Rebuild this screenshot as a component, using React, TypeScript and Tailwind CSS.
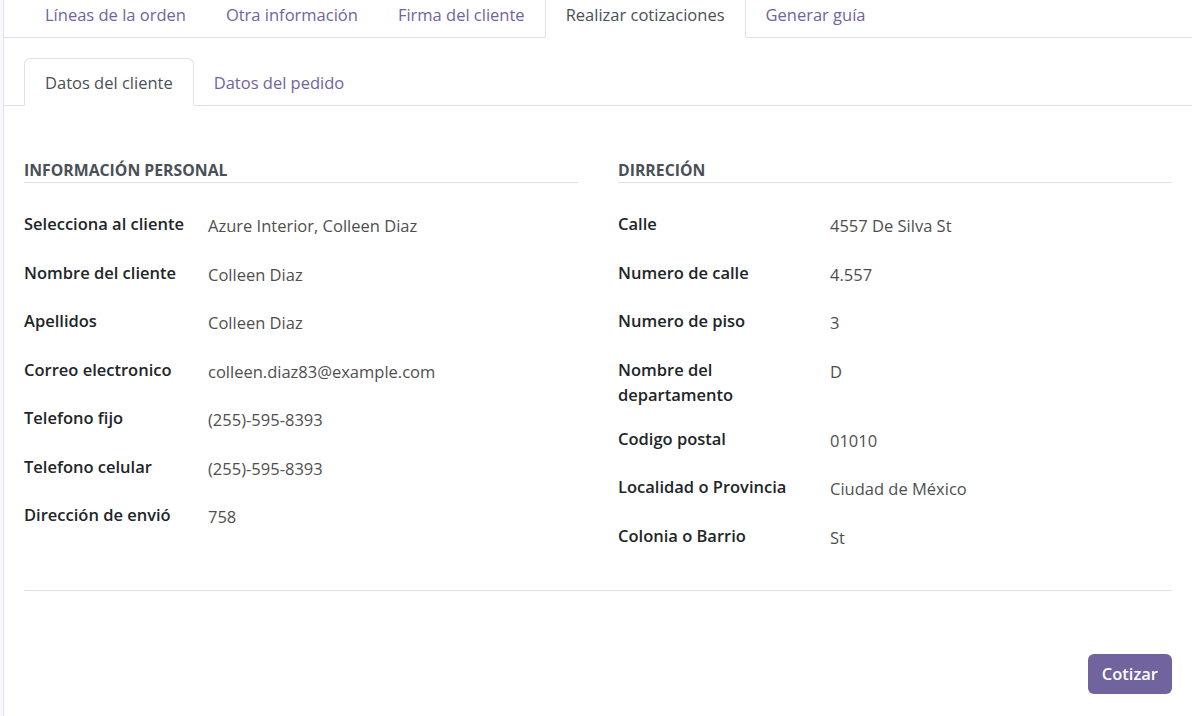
import React from "react";

const font = { fontFamily: '"Open Sans", "Noto Sans", sans-serif' };

const topTabs = [
  "Líneas de la orden",
  "Otra información",
  "Firma del cliente",
  "Realizar cotizaciones",
  "Generar guía",
];

const personal = [
  ["Selecciona al cliente", "Azure Interior, Colleen Diaz"],
  ["Nombre del cliente", "Colleen Diaz"],
  ["Apellidos", "Colleen Diaz"],
  ["Correo electronico", "colleen.diaz83@example.com"],
  ["Telefono fijo", "(255)-595-8393"],
  ["Telefono celular", "(255)-595-8393"],
  ["Dirección de envió", "758"],
];

const address = [
  ["Calle", "4557 De Silva St"],
  ["Numero de calle", "4.557"],
  ["Numero de piso", "3"],
  ["Nombre del departamento", "D"],
  ["Codigo postal", "01010"],
  ["Localidad o Provincia", "Ciudad de México"],
  ["Colonia o Barrio", "St"],
];

function Field({ label, value, labelW }: { label: string; value: string; labelW: string }) {
  return (
    <div className="flex min-h-[48.5px]">
      <div className={`${labelW} shrink-0 pb-[19px] pr-4 text-[16.5px] font-semibold leading-[25px] text-[#212529]`}>
        {label}
      </div>
      <div className="pt-[2px] text-[16.5px] leading-[25px] text-[#4f4f4f]">{value}</div>
    </div>
  );
}

export default function App() {
  return (
    <div className="flex h-[716px] w-[1192px] overflow-hidden bg-white" style={font}>
      <div className="w-[3px] shrink-0 bg-[#f8f9fa]" />
      <div className="flex-1 border-l border-[#dee2e6]">
        {/* top tabs */}
        <div className="flex border-b border-[#dee2e6] pl-[21px]">
          {topTabs.map((t, i) =>
            i === 3 ? (
              <div
                key={t}
                className="-mb-px border-x border-b border-x-[#dee2e6] border-b-white bg-white px-5 pb-[10px] pt-[3px] text-[16.5px] leading-6 text-[#495057]"
              >
                {t}
              </div>
            ) : (
              <div key={t} className="px-5 pb-[10px] pt-[3px] text-[16.5px] leading-6 text-[#71639e]">
                {t}
              </div>
            )
          )}
        </div>

        {/* inner tabs */}
        <div className="mt-5 flex border-b border-[#dee2e6] pl-[20px]">
          <div className="-mb-px rounded-t-md border border-[#dee2e6] border-b-white bg-white px-5 pb-[10px] pt-3 text-[16.5px] leading-6 text-[#495057]">
            Datos del cliente
          </div>
          <div className="px-5 pb-[10px] pt-[13px] text-[16.5px] leading-6 text-[#71639e]">Datos del pedido</div>
        </div>

        <div className="px-5 pt-[54px]">
          <div className="grid grid-cols-2 gap-10">
            <div>
              <div className="border-b border-[#dee2e6] pb-[2px] text-[15.8px] font-bold uppercase leading-5 text-[#495057]">
                Información personal
              </div>
              <div className="pt-[28px]">
                {personal.map(([l, v]) => (
                  <Field key={l} label={l} value={v} labelW="w-[184px]" />
                ))}
              </div>
            </div>
            <div>
              <div className="border-b border-[#dee2e6] pb-[2px] text-[15.8px] font-bold uppercase leading-5 text-[#495057]">
                Dirreción
              </div>
              <div className="pt-[28px]">
                {address.map(([l, v]) => (
                  <Field key={l} label={l} value={v} labelW="w-[212px]" />
                ))}
              </div>
            </div>
          </div>

          <div className="mt-[19px] border-t border-[#dee2e6]" />

          <div className="flex justify-end pt-[63px]">
            <button className="h-10 rounded-md bg-[#71639e] px-[14px] text-[16.5px] font-semibold text-white">
              Cotizar
            </button>
          </div>
        </div>
      </div>
    </div>
  );
}
